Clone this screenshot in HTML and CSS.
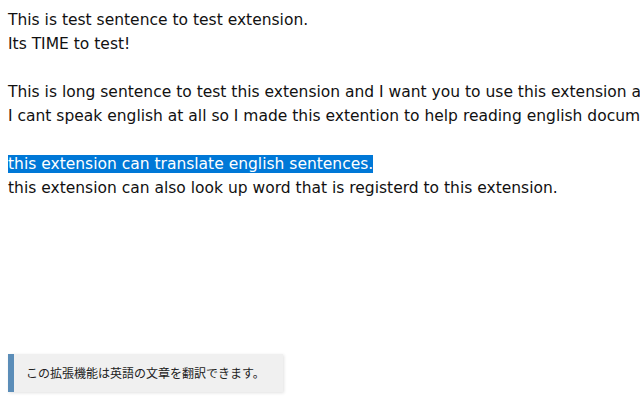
FILE: index.html
```html
<!DOCTYPE html>
<html lang="ja">
<head>
  <meta charset="UTF-8">
  <title>Translate test</title>
  <link rel="stylesheet" href="styles.css">
</head>
<body>
  <div class="page">
    <p>This is test sentence to test extension.<br>Its TIME to test!</p>
    <p>This is long sentence to test this extension and I want you to use this extension a lot because this is very useful.<br>I cant speak english at all so I made this extention to help reading english documents.</p>
    <p><span class="selected">this extension can translate english sentences.</span><br>this extension can also look up word that is registerd to this extension.</p>
  </div>

  <div class="popup">この拡張機能は英語の文章を翻訳できます。</div>
</body>
</html>
```

FILE: styles.css
```css
* {
  margin: 0;
  padding: 0;
  box-sizing: border-box;
}

html, body {
  height: 100%;
  overflow: hidden;
}

body {
  font-family: "DejaVu Sans", "Noto Sans CJK JP", sans-serif;
  font-size: 15.5px;
  line-height: 24px;
  color: #111;
  background: #fff;
  padding: 8px 0 0 8px;
  white-space: nowrap;
}

.page p {
  margin-bottom: 24px;
}

.selected {
  background: #0078d7;
  color: #fff;
}

.popup {
  position: absolute;
  left: 8px;
  top: 354px;
  width: 275px;
  height: 38px;
  padding: 0 0 0 12px;
  display: flex;
  align-items: center;
  background: #f0f0f0;
  border-left: 6px solid #5b8db8;
  box-shadow: 1px 1px 3px rgba(0,0,0,0.12);
  font-family: "Noto Sans CJK JP", sans-serif;
  font-size: 12px;
  color: #222;
}
```
